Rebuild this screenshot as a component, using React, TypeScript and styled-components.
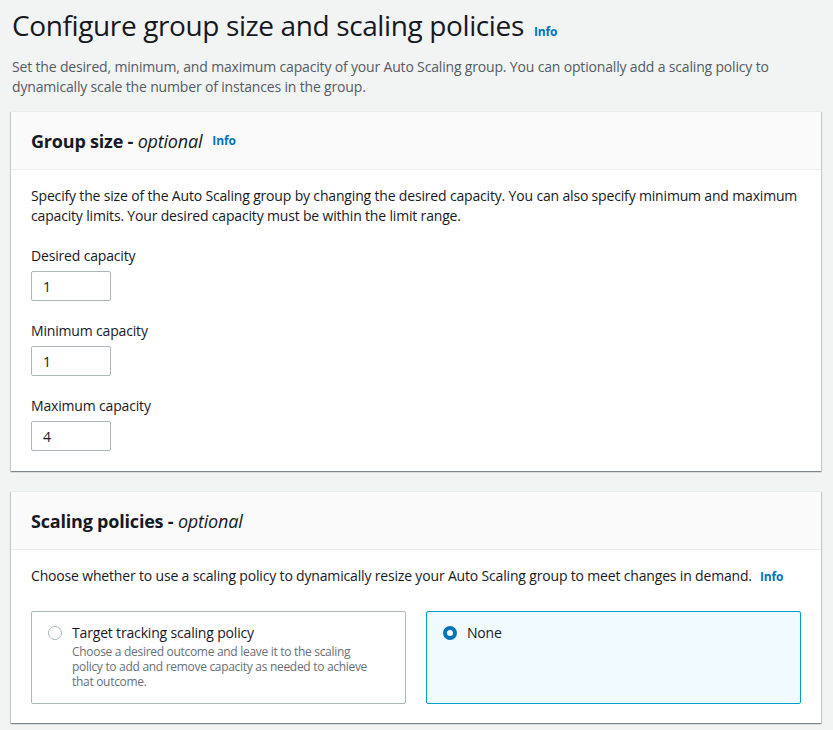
import React, { useState } from "react";
import styled, { createGlobalStyle } from "styled-components";

const Global = createGlobalStyle`
  html, body {
    margin: 0;
    padding: 0;
    background: #f2f3f3;
  }
  body {
    font-family: "Open Sans", "Noto Sans", sans-serif;
    color: #16191f;
    letter-spacing: -0.17px;
  }
`;

const Page = styled.div`
  padding: 6px 12px 12px 11px;
`;

const Title = styled.h1`
  margin: 0;
  padding-left: 1px;
  font-size: 28px;
  font-weight: 400;
  line-height: 38px;
  letter-spacing: -0.38px;
  color: #16191f;
  display: flex;
  align-items: baseline;
  gap: 10px;
`;

const InfoLink = styled.a`
  font-size: 12px;
  font-weight: 700;
  letter-spacing: -0.1px;
  color: #0073bb;
  text-decoration: none;
  cursor: pointer;
`;

const Lead = styled.p`
  margin: 6px 0 14px 1px;
  font-size: 14px;
  line-height: 20px;
  color: #545b64;
`;

const Card = styled.section`
  background: #fff;
  border-top: 1px solid #eaeded;
  box-shadow: 0 1px 1px 0 rgba(0, 28, 36, 0.3), 1px 1px 1px 0 rgba(0, 28, 36, 0.15),
    -1px 1px 1px 0 rgba(0, 28, 36, 0.15);
  & + & {
    margin-top: 20px;
  }
`;

const CardHeader = styled.header`
  background: #fafafa;
  border-bottom: 1px solid #eaeded;
  padding: 0 20px;
  height: 57px;
  display: flex;
  align-items: center;
  gap: 10px;
`;

const CardTitle = styled.h2`
  margin: 0;
  font-size: 18px;
  font-weight: 700;
  line-height: 22px;
  letter-spacing: -0.2px;
  color: #16191f;
  em {
    font-weight: 500;
  }
`;

const CardBody = styled.div<{ $bottom?: number }>`
  padding: 16px 20px ${(p) => p.$bottom ?? 20}px;
`;

const Text = styled.p`
  margin: 0;
  font-size: 14px;
  line-height: 20px;
  color: #16191f;
  ${InfoLink} {
    margin-left: 8px;
  }
`;

const Field = styled.div`
  margin-top: 20px;
`;

const Label = styled.label`
  display: block;
  font-size: 14px;
  line-height: 20px;
  color: #16191f;
  margin-bottom: 5px;
`;

const Input = styled.input`
  box-sizing: border-box;
  width: 80px;
  height: 30px;
  padding: 0 11px;
  border: 1px solid #aab7b8;
  border-radius: 2px;
  font: inherit;
  font-size: 14px;
  color: #16191f;
  background: #fff;
  outline: none;
`;

const Tiles = styled.div`
  margin-top: 24px;
  display: grid;
  grid-template-columns: 1fr 1fr;
  gap: 20px;
`;

const Tile = styled.label<{ $active?: boolean }>`
  box-sizing: border-box;
  height: 93px;
  padding: 10px 16px;
  border: 1px solid ${(p) => (p.$active ? "#00a1c9" : "#aab7b8")};
  background: ${(p) => (p.$active ? "#f1faff" : "#fff")};
  border-radius: 2px;
  display: flex;
  align-items: flex-start;
  gap: 10px;
  cursor: pointer;
`;

const Radio = styled.span<{ $checked?: boolean }>`
  box-sizing: border-box;
  flex: none;
  width: 14px;
  height: 14px;
  margin-top: 4px;
  border-radius: 50%;
  border: ${(p) => (p.$checked ? "4px solid #0073bb" : "1px solid #aab7b8")};
  background: #fff;
`;

const TileText = styled.div`
  display: flex;
  flex-direction: column;
`;

const TileTitle = styled.span`
  font-size: 14px;
  line-height: 22px;
  color: #16191f;
`;

const TileDesc = styled.span`
  font-size: 12px;
  line-height: 15px;
  letter-spacing: -0.3px;
  color: #687078;
  max-width: 308px;
`;

function App() {
  const [policy, setPolicy] = useState("none");
  const fields = [
    { label: "Desired capacity", value: "1" },
    { label: "Minimum capacity", value: "1" },
    { label: "Maximum capacity", value: "4" },
  ];
  return (
    <Page>
      <Global />
      <Title>
        Configure group size and scaling policies <InfoLink>Info</InfoLink>
      </Title>
      <Lead>
        Set the desired, minimum, and maximum capacity of your Auto Scaling group. You can optionally add a
        scaling policy to dynamically scale the number of instances in the group.
      </Lead>

      <Card>
        <CardHeader>
          <CardTitle>
            Group size - <em>optional</em>
          </CardTitle>
          <InfoLink>Info</InfoLink>
        </CardHeader>
        <CardBody>
          <Text>
            Specify the size of the Auto Scaling group by changing the desired capacity. You can also specify
            minimum and maximum capacity limits. Your desired capacity must be within the limit range.
          </Text>
          {fields.map((f) => (
            <Field key={f.label}>
              <Label>{f.label}</Label>
              <Input defaultValue={f.value} />
            </Field>
          ))}
        </CardBody>
      </Card>

      <Card>
        <CardHeader>
          <CardTitle>
            Scaling policies - <em>optional</em>
          </CardTitle>
        </CardHeader>
        <CardBody $bottom={19}>
          <Text>
            Choose whether to use a scaling policy to dynamically resize your Auto Scaling group to meet changes
            in demand.
            <InfoLink>Info</InfoLink>
          </Text>
          <Tiles>
            <Tile $active={policy === "target"} onClick={() => setPolicy("target")}>
              <Radio $checked={policy === "target"} />
              <TileText>
                <TileTitle>Target tracking scaling policy</TileTitle>
                <TileDesc>
                  Choose a desired outcome and leave it to the scaling policy to add and remove capacity as
                  needed to achieve that outcome.
                </TileDesc>
              </TileText>
            </Tile>
            <Tile $active={policy === "none"} onClick={() => setPolicy("none")}>
              <Radio $checked={policy === "none"} />
              <TileText>
                <TileTitle>None</TileTitle>
              </TileText>
            </Tile>
          </Tiles>
        </CardBody>
      </Card>
    </Page>
  );
}

export default App;
